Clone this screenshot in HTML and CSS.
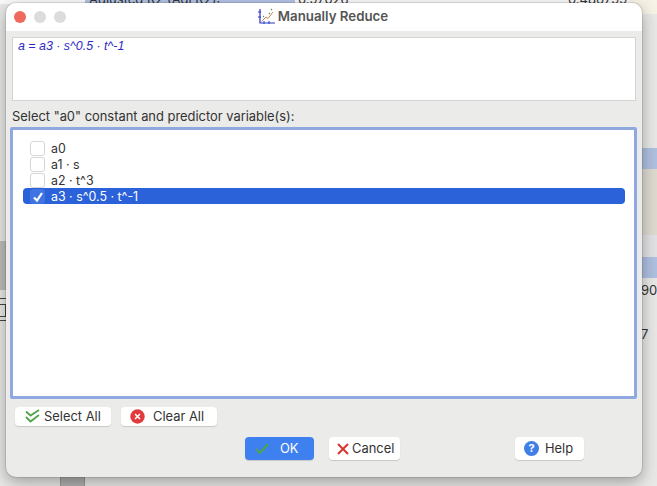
FILE: index.html
```html
<!DOCTYPE html>
<html lang="en">

<head>
    <meta charset="UTF-8">
    <title>Manually Reduce</title>
    <link rel="stylesheet" href="styles.css">
</head>

<body>
    <!-- window behind the dialog -->
    <div class="behind">
        <div class="bg-strip"></div>
        <div class="bg-corner"></div>
        <div class="bg-row-top"></div>
        <div class="bg-text bg-adj">Adjusted R2 (Adj R2):</div>
        <div class="bg-text bg-val1">0.97026</div>
        <div class="bg-text bg-val2">0.480799</div>
        <div class="bg-band band-1"></div>
        <div class="bg-band band-2"></div>
        <div class="bg-band band-3"></div>
        <div class="bg-band band-4"></div>
        <div class="bg-text bg-90">90</div>
        <div class="bg-text bg-7">7</div>
        <div class="bg-left"></div>
        <div class="bg-d"></div>
        <div class="bg-bottom"></div>
    </div>

    <div class="dialog">
        <div class="titlebar">
            <div class="lights">
                <span class="light red"></span>
                <span class="light"></span>
                <span class="light"></span>
            </div>
            <div class="title">
                <svg class="chart-icon" width="17" height="17" viewBox="0 0 17 17">
                    <path d="M2 1v14h15" fill="none" stroke="#2a35c8" stroke-width="1.2" />
                    <path d="M0 4h3M0 9h3M6 13v3M11 13v3" stroke="#2a35c8" stroke-width="1" />
                    <path d="M3.5 13.5L8 9l2 1.5L15 4" fill="none" stroke="#c98a5a" stroke-width="1" />
                    <path d="M5 9l1-1M11 6l1-1M13 2l1-1" stroke="#5a9a5a" stroke-width="1.2" />
                </svg>
                <span>Manually Reduce</span>
            </div>
        </div>

        <div class="content">
            <div class="equation">a = a3 · s^0.5 · t^-1</div>
            <div class="select-label">Select "a0" constant and predictor variable(s):</div>

            <ul class="var-list">
                <li class="var"><span class="check"></span>a0</li>
                <li class="var"><span class="check"></span>a1 · s</li>
                <li class="var"><span class="check"></span>a2 · t^3</li>
                <li class="var act">
                    <span class="check">
                        <svg width="14" height="14" viewBox="0 0 14 14">
                            <path d="M3 7.5l3 3 5-7.5" fill="none" stroke="#fff" stroke-width="2.2" />
                        </svg>
                    </span>a3 · s^0.5 · t^-1
                </li>
            </ul>

            <div class="list-buttons">
                <div class="btn small">
                    <svg width="17" height="15" viewBox="0 0 17 15">
                        <path d="M2 2.5l4.5 4L15 1M2 8l4.5 4.5L15 6" fill="none" stroke="#4ea64a" stroke-width="1.8" />
                    </svg>
                    <span>Select All</span>
                </div>
                <div class="btn small clear">
                    <svg width="15" height="15" viewBox="0 0 15 15">
                        <circle cx="7.5" cy="7.5" r="7.2" fill="#e2393a" />
                        <path d="M5 5l5 5M10 5l-5 5" stroke="#fff" stroke-width="1.6" />
                    </svg>
                    <span>Clear All</span>
                </div>
            </div>

            <div class="main-buttons">
                <div class="btn big ok">
                    <svg width="14" height="11" viewBox="0 0 14 11">
                        <path d="M1 6l4 4 8-9" fill="none" stroke="#4ea64a" stroke-width="2" />
                    </svg>
                    <span>OK</span>
                </div>
                <div class="btn big cancel">
                    <svg width="12" height="12" viewBox="0 0 12 12">
                        <path d="M1 1l10 10M11 1L1 11" stroke="#d9352a" stroke-width="2" />
                    </svg>
                    <span>Cancel</span>
                </div>
                <div class="btn big help">
                    <svg width="15" height="15" viewBox="0 0 15 15">
                        <circle cx="7.5" cy="7.5" r="7.5" fill="#3f7fe6" />
                        <text x="7.5" y="11" text-anchor="middle" class="help-mark">?</text>
                    </svg>
                    <span>Help</span>
                </div>
            </div>
        </div>
    </div>
</body>

</html>
```

FILE: styles.css
```css
* {
    margin: 0;
    padding: 0;
    box-sizing: border-box;
}

ul {
    list-style: none;
}

body {
    width: 657px;
    height: 486px;
    overflow: hidden;
    position: relative;
    background-color: #e8e8e6;
    font-family: Inter, "Liberation Sans", sans-serif;
    font-size: 13px;
    color: #333;
}

/* window behind */
.behind div {
    position: absolute;
}

.bg-strip {
    left: 0;
    top: 0;
    width: 642px;
    height: 4px;
    background-color: #fafafa;
}

.bg-corner {
    left: 630px;
    top: 0;
    width: 27px;
    height: 14px;
    background-color: #f6f2e6;
}

.bg-row-top {
    left: 85px;
    top: 0;
    width: 210px;
    height: 4px;
    background-color: #b4c4e6;
}

.bg-text {
    font-size: 13px;
    line-height: 15px;
    color: #333;
}

.bg-adj {
    left: 89px;
    top: -8px;
}

.bg-val1 {
    left: 298px;
    top: -8px;
}

.bg-val2 {
    left: 568px;
    top: -8px;
}

.bg-band {
    left: 642px;
    width: 15px;
}

.band-1 {
    top: 148px;
    height: 21px;
    background-color: #afc0e0;
}

.band-2 {
    top: 169px;
    height: 66px;
    background-color: #dedad0;
}

.band-3 {
    top: 235px;
    height: 22px;
    background-color: #e2e2e4;
}

.band-4 {
    top: 257px;
    height: 21px;
    background-color: #afc0e0;
}

.bg-90 {
    left: 641px;
    top: 283px;
}

.bg-7 {
    left: 641px;
    top: 327px;
}

.bg-left {
    left: 0;
    top: 241px;
    width: 7px;
    height: 49px;
    background-color: #bdbdb9;
}

.bg-d {
    left: 0;
    top: 298px;
    width: 7px;
    height: 23px;
    border-top: 1px solid #444;
    border-bottom: 1px solid #444;
}

.bg-d::after {
    content: "";
    position: absolute;
    left: 0;
    top: 5px;
    width: 5px;
    height: 11px;
    border: 1px solid #444;
    border-left: 0;
}

.bg-bottom {
    left: 60px;
    top: 476px;
    width: 25px;
    height: 10px;
    background-color: #b0b0b0;
    border-left: 1px solid #999;
    border-right: 1px solid #999;
}

/* dialog */
.dialog {
    position: absolute;
    left: 6px;
    top: 3px;
    width: 636px;
    height: 474px;
    background-color: #ebebe9;
    border-radius: 10px;
    overflow: hidden;
    box-shadow: 0 0 0 1px rgba(0, 0, 0, 0.1), 0 5px 16px rgba(0, 0, 0, 0.32);
}

.titlebar {
    height: 28px;
    position: relative;
    display: flex;
    justify-content: center;
    align-items: center;
    background-color: #fff;
}

.lights {
    position: absolute;
    left: 8px;
    top: 8px;
    display: flex;
    gap: 8px;
}

.light {
    width: 12px;
    height: 12px;
    border-radius: 50%;
    background-color: #dcdcdc;
}

.light.red {
    background-color: #ee6a5e;
}

.title {
    display: flex;
    align-items: center;
    gap: 3px;
    margin: 0 2px 2px 0;
    font-weight: 600;
    font-size: 13.3px;
    color: #555;
}

.content {
    padding: 6px 5px 0 4px;
}

.equation {
    height: 64px;
    margin: 0 1px 0 2px;
    padding: 1px 5px;
    background-color: #fff;
    border: 1px solid #d4d4d4;
    font-family: "Liberation Sans", Arial, sans-serif;
    font-style: italic;
    font-size: 12.4px;
    color: #2b2bc4;
}

.select-label {
    margin: 8px 0 0 2px;
    height: 18px;
    line-height: 15px;
    font-size: 12.9px;
    color: #333;
}

.var-list {
    height: 272px;
    padding: 10px 9px 0 10px;
    background-color: #fff;
    border: 3px solid #8fa9e0;
    border-radius: 2px;
}

.var {
    height: 16px;
    padding-left: 7px;
    display: flex;
    align-items: center;
    font-size: 12.4px;
    color: #333;
}

.var .check {
    width: 15px;
    height: 15px;
    margin-right: 6px;
    background-color: #fff;
    border: 1px solid #d6d6d6;
    border-radius: 3px;
}

.var.act {
    color: #fff;
    background-color: #2b62d9;
    border-radius: 4px;
}

.var.act .check {
    background-color: #3f74e2;
    border-color: #3f74e2;
}

.list-buttons {
    display: flex;
    gap: 10px;
    margin: 8px 0 0 5px;
}

.main-buttons {
    display: flex;
    margin: 11px 0 0 235px;
}

.btn {
    display: flex;
    align-items: center;
    background-color: #fff;
    border-radius: 4px;
    box-shadow: 0 1px 1px rgba(0, 0, 0, 0.15);
    font-size: 12.9px;
    color: #333;
}

.btn.small {
    width: 96px;
    height: 19px;
    padding-left: 9px;
    gap: 3px;
}

.btn.small.clear {
    gap: 8px;
}

.btn.big {
    height: 23px;
}

.ok {
    width: 69px;
    padding-left: 10px;
    gap: 11px;
    background-color: #3f80f0;
}

.ok span {
    color: #fff;
}

.cancel {
    width: 71px;
    margin-left: 15px;
    padding-left: 8px;
    gap: 3px;
}

.help {
    width: 69px;
    margin-left: 115px;
    padding-left: 9px;
    gap: 6px;
}

.help-mark {
    font-size: 11px;
    font-weight: bold;
    fill: #fff;
}
```
